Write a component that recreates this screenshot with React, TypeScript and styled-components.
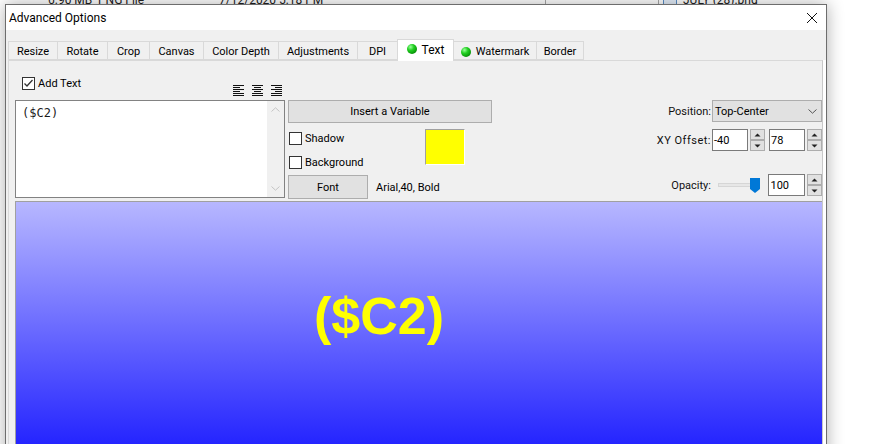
import React from 'react';
import styled, { createGlobalStyle } from 'styled-components';

const Global = createGlobalStyle`
  *, *::before, *::after { box-sizing: border-box; }
  html, body { margin: 0; padding: 0; background: #fff; overflow: hidden; }
  body { font-family: Roboto, "Noto Sans", "Liberation Sans", sans-serif; font-size: 11px; color: #000; }
`;

const Page = styled.div`
  width: 870px;
  height: 444px;
  overflow: hidden;
  background: #fff;
  display: flex;
  flex-direction: column;
`;

/* Background explorer list peeking above the dialog */
const BgRow = styled.div`
  height: 4px;
  flex-shrink: 0;
  display: flex;
  align-items: flex-end;
  overflow: hidden;
  color: #222;
  font-size: 12px;
`;

const BgCell = styled.div<{ $w: number; $pl?: number; $divider?: boolean }>`
  width: ${(p) => p.$w}px;
  padding-left: ${(p) => p.$pl ?? 0}px;
  height: 4px;
  display: flex;
  align-items: flex-end;
  gap: 6px;
  flex-shrink: 0;
  border-right: ${(p) => (p.$divider ? '1px solid #a8a8a8' : 'none')};
  white-space: nowrap;
  & > span {
    line-height: 12px;
    margin-bottom: -2px;
  }
`;

const BgIcon = styled.span`
  display: inline-block;
  width: 14px;
  height: 12px;
  border: 1px solid #5a8fc8;
  background: #e4eefa;
`;

const Dialog = styled.div`
  margin-left: 5px;
  width: 822px;
  height: 460px;
  flex-shrink: 0;
  border: 1px solid #6d6d6d;
  border-bottom: none;
  background: #f0f0f0;
  box-shadow: 0 0 16px rgba(0, 0, 0, 0.32);
  display: flex;
  flex-direction: column;
  position: relative;
  z-index: 1;
`;

const TitleBar = styled.div`
  height: 25px;
  flex-shrink: 0;
  background: #fff;
  display: flex;
  align-items: center;
  padding-left: 3px;
  padding-right: 9px;
`;

const Title = styled.span`
  font-size: 12px;
  padding-top: 1px;
`;

const CloseBtn = styled.span`
  margin-left: auto;
  display: flex;
  width: 10px;
  height: 10px;
`;

const Body = styled.div`
  flex: 1;
  display: flex;
  flex-direction: column;
  padding-top: 11px;
`;

const TabRow = styled.div`
  height: 19px;
  flex-shrink: 0;
  display: flex;
  align-items: flex-end;
  padding-left: 2px;
  position: relative;
  z-index: 2;
`;

const Tab = styled.div<{ $w: number; $active?: boolean }>`
  width: ${(p) => p.$w}px;
  height: ${(p) => (p.$active ? 22 : 19)}px;
  margin-bottom: ${(p) => (p.$active ? -1 : 0)}px;
  margin-left: -1px;
  &:first-child { margin-left: 0; }
  border: 1px solid #d9d9d9;
  border-bottom: ${(p) => (p.$active ? 'none' : '1px solid #d9d9d9')};
  background: ${(p) => (p.$active ? '#fff' : '#f0f0f0')};
  display: flex;
  align-items: ${(p) => (p.$active ? 'flex-start' : 'center')};
  padding-top: ${(p) => (p.$active ? 3 : 1)}px;
  justify-content: center;
  gap: 5px;
  position: relative;
  z-index: ${(p) => (p.$active ? 2 : 1)};
  white-space: nowrap;
  font-size: ${(p) => (p.$active ? 12 : 11)}px;
`;

const Dot = styled.span`
  width: 10px;
  height: 10px;
  border-radius: 50%;
  background: radial-gradient(circle at 35% 30%, #9dff9d 0%, #22d022 35%, #0a9a0a 70%, #056005 100%);
  flex-shrink: 0;
  margin-top: 1px;
`;

const PanelArea = styled.div`
  flex: 1;
  display: flex;
  padding-left: 2px;
  padding-right: 3px;
  background: linear-gradient(to right, #f0f0f0 calc(100% - 3px), #fff calc(100% - 3px));
`;

const Panel = styled.div`
  flex: 1;
  border: 1px solid #d9d9d9;
  border-right-color: #c8c8c8;
  background: #f0f0f0;
  padding-left: 6px;
  display: flex;
  flex-direction: column;
`;

const HeaderRow = styled.div`
  width: 270px;
  height: 39px;
  flex-shrink: 0;
  display: flex;
  align-items: flex-start;
  padding-top: 16px;
  padding-left: 7px;
  padding-right: 3px;
`;

const CheckLabel = styled.label`
  display: flex;
  align-items: center;
  gap: 3px;
  height: 13px;
  white-space: nowrap;
`;

const Box = styled.span`
  width: 13px;
  height: 13px;
  border: 1px solid #333;
  background: #fff;
  display: flex;
  align-items: center;
  justify-content: center;
  flex-shrink: 0;
`;

const AlignGroup = styled.div`
  margin-left: auto;
  margin-top: 8px;
  display: flex;
  gap: 8px;
`;

const EditorRow = styled.div`
  display: flex;
  gap: 3px;
  height: 99px;
  flex-shrink: 0;
`;

const TextBox = styled.div`
  width: 270px;
  height: 98px;
  border: 1px solid #828282;
  background: #fff;
  display: flex;
`;

const TextContent = styled.div`
  flex: 1;
  padding: 5px 0 0 6px;
  font-family: "DejaVu Sans Mono", "Liberation Mono", monospace;
  font-size: 12px;
  line-height: 15px;
  color: #1a1a1a;
`;

const ScrollBar = styled.div`
  width: 17px;
  background: #f0f0f0;
  display: flex;
  flex-direction: column;
  justify-content: space-between;
`;

const ScrollBtn = styled.div`
  height: 17px;
  display: flex;
  align-items: center;
  justify-content: center;
`;

const MiddleCol = styled.div`
  width: 204px;
  display: flex;
  flex-direction: column;
`;

const Button = styled.div<{ $w?: number; $h: number }>`
  width: ${(p) => (p.$w ? `${p.$w}px` : '100%')};
  height: ${(p) => p.$h}px;
  border: 1px solid #adadad;
  background: #e1e1e1;
  display: flex;
  align-items: center;
  justify-content: center;
  flex-shrink: 0;
`;

const OptionsRow = styled.div`
  height: 52px;
  display: grid;
  grid-template-columns: 137px 40px;
  padding-top: 6px;
`;

const CheckCol = styled.div`
  display: flex;
  flex-direction: column;
  gap: 11px;
  padding-left: 1px;
  padding-top: 3px;
`;

const Swatch = styled.div<{ $color: string }>`
  width: 40px;
  height: 36px;
  background: ${(p) => p.$color};
  border-top: 1px solid #a0a0a0;
  border-left: 1px solid #a0a0a0;
  border-right: 1px solid #fff;
  border-bottom: 1px solid #fff;
`;

const FontRow = styled.div`
  display: flex;
  align-items: center;
  gap: 8px;
`;

const RightCol = styled.div`
  flex: 1;
  display: flex;
  flex-direction: column;
  align-items: flex-end;
`;

const FieldRow = styled.div<{ $mt: number }>`
  display: flex;
  align-items: center;
  gap: 1px;
  margin-top: ${(p) => p.$mt}px;
  height: 22px;
`;

const FieldLabel = styled.span<{ $spacing?: number }>`
  letter-spacing: ${(p) => p.$spacing ?? 0}px;
  color: #111;
  white-space: nowrap;
`;

const Controls = styled.div`
  width: 110px;
  height: 22px;
  display: flex;
  align-items: stretch;
`;

const Select = styled.div`
  width: 110px;
  height: 22px;
  border: 1px solid #adadad;
  background: #e1e1e1;
  display: flex;
  align-items: center;
  padding-left: 2px;
  padding-right: 4px;
  justify-content: space-between;
`;

const NumInput = styled.div<{ $ml?: number }>`
  width: 37px;
  margin-left: ${(p) => p.$ml ?? 0}px;
  border: 1px solid #7a7a7a;
  background: #fff;
  display: flex;
  align-items: center;
  padding-left: 1px;
`;

const Spinner = styled.div<{ $ml: number }>`
  width: 15px;
  margin-left: ${(p) => p.$ml}px;
  display: flex;
  flex-direction: column;
`;

const SpinBtn = styled.div`
  flex: 1;
  border: 1px solid #adadad;
  background: #e1e1e1;
  display: flex;
  align-items: center;
  justify-content: center;
`;

const SliderWrap = styled.div`
  width: 57px;
  position: relative;
  display: flex;
  align-items: center;
  padding-left: 6px;
`;

const Track = styled.div`
  width: 38px;
  height: 4px;
  background: #e7e7e7;
  border: 1px solid #d6d6d6;
`;

const Thumb = styled.div`
  position: absolute;
  left: 38px;
  top: 4px;
  width: 10px;
  height: 15px;
`;

const Preview = styled.div`
  margin-top: 2px;
  height: 260px;
  flex-shrink: 0;
  border-top: 1px solid #a0a0a0;
  border-left: 1px solid #a0a0a0;
  background: linear-gradient(#b7b7ff 0px, #2424ff 243px, #2020ff 260px);
  display: flex;
  justify-content: center;
  padding-top: 88px;
`;

const PreviewText = styled.div<{ $dx: number }>`
  font-family: "Liberation Sans", Arial, sans-serif;
  font-weight: bold;
  font-size: 52px;
  line-height: 52px;
  height: 52px;
  color: #ffff00;
  transform: translateX(${(p) => p.$dx}px);
`;

const tabs: { label: string; w: number; dot?: boolean; active?: boolean }[] = [
  { label: 'Resize', w: 50 },
  { label: 'Rotate', w: 51 },
  { label: 'Crop', w: 43 },
  { label: 'Canvas', w: 55 },
  { label: 'Color Depth', w: 76 },
  { label: 'Adjustments', w: 80 },
  { label: 'DPI', w: 41 },
  { label: 'Text', w: 57, dot: true, active: true },
  { label: 'Watermark', w: 84, dot: true },
  { label: 'Border', w: 48 },
];

const AlignIcon = ({ kind }: { kind: 'left' | 'center' | 'right' }) => {
  const widths = [11, 7, 11, 7, 11, 11];
  return (
    <svg width="11" height="12" viewBox="0 0 11 12">
      {widths.map((w, i) => {
        const x = kind === 'left' ? 0 : kind === 'right' ? 11 - w : (11 - w) / 2;
        return <rect key={i} x={x} y={i * 2} width={w} height="1" fill="#111" />;
      })}
    </svg>
  );
};

const Check = ({ checked }: { checked?: boolean }) => (
  <Box>
    {checked && (
      <svg width="11" height="11" viewBox="0 0 11 11">
        <path d="M1.5 5.5 L4 8 L9.5 2" fill="none" stroke="#333" strokeWidth="1.3" />
      </svg>
    )}
  </Box>
);

const Tri = ({ up }: { up?: boolean }) => (
  <svg width="7" height="4" viewBox="0 0 7 4">
    <path d={up ? 'M0.5 3.5 L3.5 0.5 L6.5 3.5 Z' : 'M0.5 0.5 L3.5 3.5 L6.5 0.5 Z'} fill="#222" />
  </svg>
);

const Spin = ({ ml }: { ml: number }) => (
  <Spinner $ml={ml}>
    <SpinBtn><Tri up /></SpinBtn>
    <SpinBtn><Tri /></SpinBtn>
  </Spinner>
);

const Chevron = ({ up, color }: { up?: boolean; color: string }) => (
  <svg width="9" height="5" viewBox="0 0 9 5">
    <path d={up ? 'M0.5 4.5 L4.5 0.8 L8.5 4.5' : 'M0.5 0.5 L4.5 4.2 L8.5 0.5'} fill="none" stroke={color} strokeWidth="1" />
  </svg>
);

export default function App() {
  return (
    <Page>
      <Global />
      <BgRow>
        <BgCell $w={98} $pl={48}><span>6.90 MB</span></BgCell>
        <BgCell $w={121}><span>PNG File</span></BgCell>
        <BgCell $w={327} $divider><span>7/12/2020 5:18 PM</span></BgCell>
        <BgCell $w={113} $divider />
        <BgCell $w={200} $pl={4}><BgIcon /><span>JULY (28).png</span></BgCell>
      </BgRow>
      <Dialog>
        <TitleBar>
          <Title>Advanced Options</Title>
          <CloseBtn>
            <svg width="10" height="10" viewBox="0 0 10 10">
              <path d="M0 0 L10 10 M10 0 L0 10" stroke="#111" strokeWidth="1" />
            </svg>
          </CloseBtn>
        </TitleBar>
        <Body>
          <TabRow>
            {tabs.map((t) => (
              <Tab key={t.label} $w={t.w} $active={t.active}>
                {t.dot && <Dot />}
                <span>{t.label}</span>
              </Tab>
            ))}
          </TabRow>
          <PanelArea>
            <Panel>
              <HeaderRow>
                <CheckLabel>
                  <Check checked />
                  <span>Add Text</span>
                </CheckLabel>
                <AlignGroup>
                  <AlignIcon kind="left" />
                  <AlignIcon kind="center" />
                  <AlignIcon kind="right" />
                </AlignGroup>
              </HeaderRow>
              <EditorRow>
                <TextBox>
                  <TextContent>($C2)</TextContent>
                  <ScrollBar>
                    <ScrollBtn><Chevron up color="#c4c4c4" /></ScrollBtn>
                    <ScrollBtn><Chevron color="#c4c4c4" /></ScrollBtn>
                  </ScrollBar>
                </TextBox>
                <MiddleCol>
                  <Button $h={23}>Insert a Variable</Button>
                  <OptionsRow>
                    <CheckCol>
                      <CheckLabel><Check /><span>Shadow</span></CheckLabel>
                      <CheckLabel><Check /><span>Background</span></CheckLabel>
                    </CheckCol>
                    <Swatch $color="#ffff00" />
                  </OptionsRow>
                  <FontRow>
                    <Button $w={80} $h={24}>Font</Button>
                    <span>Arial,40, Bold</span>
                  </FontRow>
                </MiddleCol>
                <RightCol>
                  <FieldRow $mt={0}>
                    <FieldLabel>Position:</FieldLabel>
                    <Select>
                      <span>Top-Center</span>
                      <Chevron color="#555" />
                    </Select>
                  </FieldRow>
                  <FieldRow $mt={7}>
                    <FieldLabel $spacing={0.5}>XY Offset:</FieldLabel>
                    <Controls>
                      <NumInput>-40</NumInput>
                      <Spin ml={2} />
                      <NumInput $ml={4}>78</NumInput>
                      <Spin ml={2} />
                    </Controls>
                  </FieldRow>
                  <FieldRow $mt={23}>
                    <FieldLabel>Opacity:</FieldLabel>
                    <Controls>
                      <SliderWrap>
                        <Track />
                        <Thumb>
                          <svg width="10" height="15" viewBox="0 0 10 15">
                            <path d="M0 0 H10 V11 L5 15 L0 11 Z" fill="#0078d7" />
                          </svg>
                        </Thumb>
                      </SliderWrap>
                      <NumInput>100</NumInput>
                      <Spin ml={2} />
                    </Controls>
                  </FieldRow>
                </RightCol>
              </EditorRow>
              <Preview>
                <PreviewText $dx={-40}>($C2)</PreviewText>
              </Preview>
            </Panel>
          </PanelArea>
        </Body>
      </Dialog>
    </Page>
  );
}
